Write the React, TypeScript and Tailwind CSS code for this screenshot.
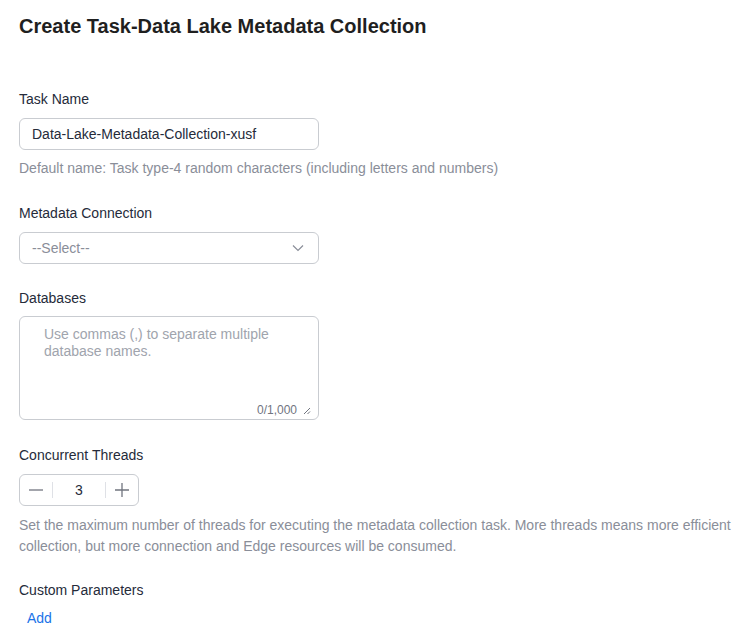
import React from "react";

export default function App() {
  const font = { fontFamily: '"Liberation Sans", Arial, sans-serif' };
  return (
    <div className="w-[738px] h-[632px] bg-white overflow-hidden text-[#333333]" style={font}>
      <div className="px-[19px] pt-[13px]">
        <h1 className="text-[20px] leading-[26px] font-bold text-[#1f1f1f]">
          Create Task-Data Lake Metadata Collection
        </h1>

        <div className="mt-[50px] flex flex-col">
          <label className="text-[14px] leading-[20px] text-[#252b3a]">Task Name</label>
          <div className="mt-[9px] w-[300px] h-[32px] rounded-[6px] border border-[#c9ccd1] flex items-center px-[12px] text-[14px] text-[#252b3a]">
            Data-Lake-Metadata-Collection-xusf
          </div>
          <p className="mt-[8px] text-[14px] leading-[20px] text-[#8a8e99]">
            Default name: Task type-4 random characters (including letters and numbers)
          </p>

          <label className="mt-[25px] text-[14px] leading-[20px] text-[#252b3a]">Metadata Connection</label>
          <div className="mt-[9px] w-[300px] h-[32px] rounded-[6px] border border-[#c9ccd1] flex items-center justify-between pl-[12px] pr-[14px] text-[14px] text-[#8a8e99]">
            <span>--Select--</span>
            <svg width="12" height="8" viewBox="0 0 12 8" fill="none">
              <path d="M1 1.5L6 6.5L11 1.5" stroke="#8a8e99" strokeWidth="1.2" />
            </svg>
          </div>

          <label className="mt-[24px] text-[14px] leading-[20px] text-[#252b3a]">Databases</label>
          <div className="mt-[8px] relative w-[300px] h-[104px] rounded-[6px] border border-[#c9ccd1] pl-[24px] pr-[30px] pt-[9px] text-[14px] leading-[17px] text-[#a0a4ad]">
            Use commas (,) to separate multiple database names.
            <div className="absolute right-[7px] bottom-0 flex items-center gap-[6px] text-[12px] text-[#71757f]">
              <span>0/1,000</span>
              <svg width="8" height="8" viewBox="0 0 8 8" fill="none">
                <path d="M7 1L1 7M7 4.5L4.5 7" stroke="#71757f" strokeWidth="1" />
              </svg>
            </div>
          </div>

          <label className="mt-[25px] text-[14px] leading-[20px] text-[#252b3a]">Concurrent Threads</label>
          <div className="mt-[9px] w-[120px] h-[32px] rounded-[6px] border border-[#c9ccd1] flex items-center text-[14px] text-[#252b3a]">
            <div className="w-[32px] h-full flex items-center justify-center">
              <svg width="14" height="14" viewBox="0 0 14 14">
                <path d="M0 7H14" stroke="#71757f" strokeWidth="1.3" />
              </svg>
            </div>
            <div className="w-px h-[16px] bg-[#dfe1e6]" />
            <div className="flex-1 text-center">3</div>
            <div className="w-px h-[16px] bg-[#dfe1e6]" />
            <div className="w-[32px] h-full flex items-center justify-center">
              <svg width="14" height="14" viewBox="0 0 14 14">
                <path d="M0 7H14M7 0V14" stroke="#71757f" strokeWidth="1.3" />
              </svg>
            </div>
          </div>
          <p className="mt-[9px] text-[14px] leading-[21px] text-[#8a8e99] w-[716px]">
            Set the maximum number of threads for executing the metadata collection task. More threads means more efficient collection, but more connection and Edge resources will be consumed.
          </p>

          <label className="mt-[23px] text-[14px] leading-[20px] text-[#252b3a]">Custom Parameters</label>
          <button className="mt-[8px] self-start ml-[8px] text-[14px] leading-[20px] text-[#1a73e8]">Add</button>
        </div>
      </div>
    </div>
  );
}
